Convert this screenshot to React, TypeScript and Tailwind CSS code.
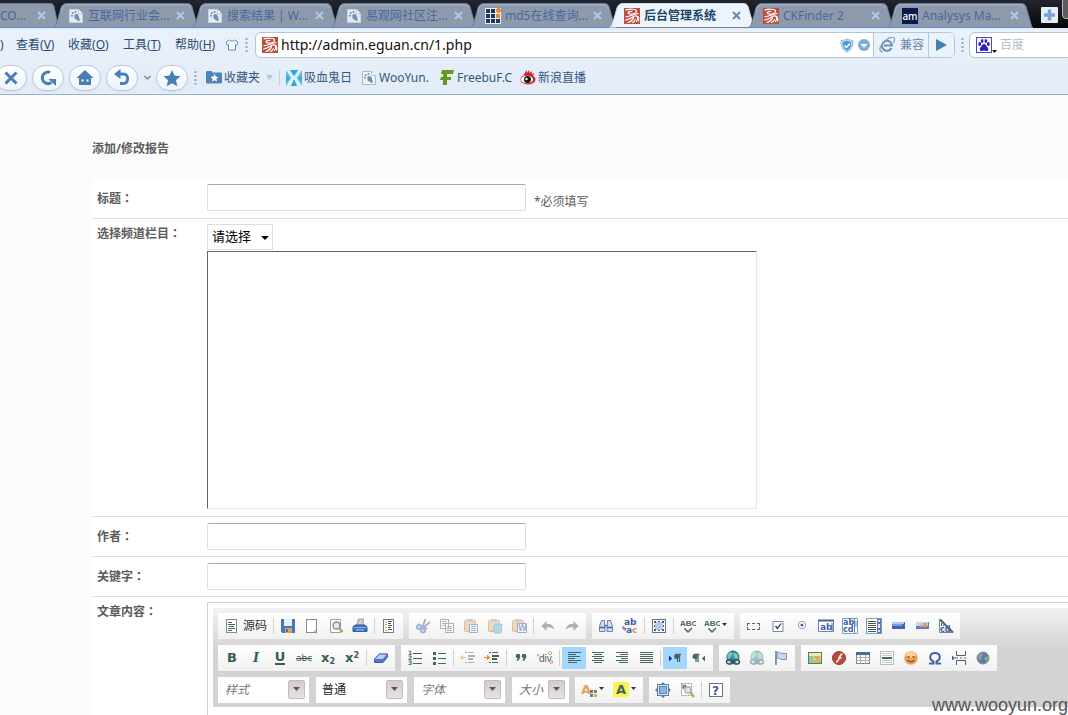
import React from "react";

type Kids = { children?: React.ReactNode };

const G = "#466663";
const B = "#435fa6";

function Ico({ children, crisp, dim }: Kids & { crisp?: boolean; dim?: boolean }) {
  return (
    <svg
      width="16"
      height="16"
      viewBox="0 0 16 16"
      fill="none"
      aria-hidden="true"
      className={dim ? "shrink-0 opacity-45" : "shrink-0"}
      shapeRendering={crisp ? "crispEdges" : undefined}
    >
      {children}
    </svg>
  );
}

/* ---------- site icons ---------- */

const PageFav = ({ faded }: { faded?: boolean }) => (
  <Ico>
    <path d="M1.500 1.500h9l4 4v9h-13z" fill={faded ? "#e3ebf2" : "#f1f5f9"} stroke={faded ? "#c6d4e1" : "#a9bac9"} />
    <path d="M10.500 1.500v4h4" fill="#fff" stroke="#b6c6d4" />
    <g fill={faded ? "#6d90b2" : "#6f8ea8"}>
      <circle cx="7.500" cy="4" r="1" />
      <circle cx="4.800" cy="5" r="1" />
      <circle cx="4" cy="7.800" r="1" />
      <path d="M6.500 6.500l3-.5 1.500 2.500v3l-2 .8-2.500-2z" />
      <path d="M9.500 10h2v3h-1.500z" />
    </g>
  </Ico>
);

const EguanFav = () => (
  <Ico>
    <rect width="16" height="16" fill="#bd4f40" />
    <g stroke="#fff" strokeWidth="1.200" strokeLinecap="round">
      <path d="M2 1.800c3-.8 10-1 10.500 1S9 6.800 6 6 3.500 3.200 8 3.500" />
      <path d="M2 8.800C6 8.500 9 6.500 14 5.500M1.500 12C6 11.500 8 8.500 11 8s3.500 2.500 1.500 5.500M4 14.500C8 13 9 11.500 9.500 9.500M8.500 14.500c1.500-.5 2.500-1.500 2.800-3M14.500 13c.3-1.500.3-3-.5-4.500" />
    </g>
  </Ico>
);

const Md5Fav = () => (
  <Ico crisp>
    <rect width="16" height="16" fill="#e9edf4" />
    <path d="M1 1h4v4H1zM6 1h4v4H6zM1 6h4v4H1zM6 6h4v4H6zM1 11h4v4H1zM6 11h4v4H6zM11 11h4v4h-4z" fill="#1e3763" />
    <path d="M11 6h4v4h-4z" fill="#ea8a2e" />
    <path d="M12 0h3v1h1v3h-1v1h-3V4h-1V1h1z" fill="#f3892c" />
  </Ico>
);

const AmFav = () => (
  <span className="flex h-4 w-4 shrink-0 items-center justify-center bg-[#0a1a4d] text-[10px] leading-none font-medium text-white">
    am
  </span>
);

const Close = ({ light }: { light?: boolean }) => (
  <svg width="9" height="9" viewBox="0 0 9 9" aria-hidden="true">
    <path d="M1 1l7 7M8 1L1 8" stroke={light ? "#a9cdee" : "#5d8cb8"} strokeWidth="2" />
  </svg>
);

/* ---------- tab strip ---------- */

type Tab = { text: string; icon: React.ReactNode; active?: boolean };

const tabs: Tab[] = [
  { text: "互联网行业会...", icon: <PageFav faded /> },
  { text: "搜索结果 | W...", icon: <PageFav faded /> },
  { text: "易观网社区注...", icon: <PageFav faded /> },
  { text: "md5在线查询...", icon: <Md5Fav /> },
  { text: "后台管理系统", icon: <EguanFav />, active: true },
  { text: "CKFinder 2", icon: <EguanFav /> },
  { text: "Analysys Ma...", icon: <AmFav /> },
];

function TabShape({ active, tail }: { active?: boolean; tail?: boolean }) {
  return (
    <svg className="pointer-events-none absolute inset-y-0 -left-1" width={tail ? 63 : 146} height="25" aria-hidden="true">
      <path
        d={
          tail
            ? "M0 .5H54c3 0 3 1 4 3l4.500 21H0"
            : "M.5 24.500C3 23 3 22 4 19l4-14c1-3 3-4.500 6-4.500H134c3 0 4 1 5 3l6 21"
        }
        fill={active ? "#edf4fc" : "#8f99ac"}
        stroke={active ? "#c6dcf3" : "#5f7fa8"}
      />
      {!active && !tail && <path d="M8 9c1-5 2-7 6-7h119c3 0 3 1 4 3" fill="none" stroke="#a9b4c5" />}
      {!active && <path d={tail ? "M0 24.500h63" : "M1 24.500h145"} stroke="#5f93cc" />}
    </svg>
  );
}

function TabStrip() {
  return (
    <div className="flex h-7 items-end overflow-hidden bg-linear-to-b from-[#22262c] to-[#08090b] text-xs">
      <div className="relative flex h-[25px] w-[57px] shrink-0 items-center">
        <TabShape tail />
        <span className="relative w-[37px] text-[#47688f]">CO...</span>
        <button type="button" aria-label="关闭" className="relative"><Close light /></button>
      </div>
      {tabs.map((t) => (
        <div key={t.text} className="relative flex h-[25px] w-[139px] shrink-0 items-center pl-[11px]">
          <TabShape active={t.active} />
          <a
            href="#tab"
            className={
              t.active
                ? "relative flex w-[108px] items-center gap-1 font-bold whitespace-nowrap text-[#1b4468]"
                : "relative flex w-[108px] items-center gap-1 whitespace-nowrap text-[#466a98]"
            }
          >
            {t.icon}
            {t.text}
          </a>
          <button type="button" aria-label="关闭" className="relative"><Close light={!t.active} /></button>
        </div>
      ))}
      <button type="button" aria-label="新标签" className="mb-[5px] ml-[11px] shrink-0">
        <svg width="17" height="16" viewBox="0 0 17 16" aria-hidden="true">
          <rect width="17" height="16" rx="1" fill="#e3eefa" />
          <path d="M8.500 2.500v11M3 8h11" stroke="#7ba3cb" strokeWidth="3.500" />
        </svg>
      </button>
      <span className="mb-[9px] ml-1 h-5 w-4 shrink-0 rounded-bl-sm border border-[#b9b9b9] bg-[#5c5c5c]" />
    </div>
  );
}

/* ---------- address row ---------- */

const Dots = () => (
  <svg width="3" height="14" viewBox="0 0 3 14" className="shrink-0" aria-hidden="true">
    <path d="M.5 0h2v2h-2zM.5 4h2v2h-2zM.5 8h2v2h-2zM.5 12h2v2h-2z" fill="#93a8bf" />
  </svg>
);

const Menu = ({ name, k, w }: { name: string; k: string; w: string }) => (
  <button type="button" className={w + " shrink-0 text-left whitespace-nowrap"}>
    {name}(<span className="underline">{k}</span>)
  </button>
);

function AddressRow() {
  return (
    <div className="flex h-8 shrink-0 items-center text-xs text-[#2b4a73]">
      <span className="w-4 shrink-0">)</span>
      <Menu name="查看" k="V" w="w-[52px]" />
      <Menu name="收藏" k="O" w="w-[55px]" />
      <Menu name="工具" k="T" w="w-[52px]" />
      <Menu name="帮助" k="H" w="w-[50px]" />
      <button type="button" aria-label="皮肤" className="shrink-0">
        <svg width="14" height="12" viewBox="0 0 14 12" aria-hidden="true">
          <path d="M4.500 1L1 3l1 3 1.500-.5V11h7V5.500L12 6l1-3-3.500-2c-1 1.500-4 1.500-5 0z" fill="#f6faff" stroke="#5b8dbb" />
        </svg>
      </button>
      <span className="ml-[6px] flex w-[10px]"><Dots /></span>
      <div className="flex h-[26px] min-w-0 flex-1 items-stretch overflow-hidden rounded-md border border-[#b3c6da] bg-white">
        <div className="flex min-w-0 flex-1 items-center gap-[3px] pl-[6px]">
          <EguanFav />
          <input
            aria-label="地址"
            defaultValue="http://admin.eguan.cn/1.php"
            className="min-w-0 flex-1 text-sm text-[#111] outline-none"
          />
        </div>
        <div className="flex items-center gap-1 pr-[3px]">
          <svg width="14" height="15" viewBox="0 0 14 15" aria-hidden="true">
            <path d="M7 .8c2 1.400 4 1.700 6 1.700 0 6-1.500 9.500-6 11.700C2.500 12 1 8.500 1 2.500c2 0 4-.3 6-1.700z" fill="#cfe8f8" stroke="#8bb9dd" />
            <path d="M7 2.500c1.500 1 3 1.300 4.500 1.300 0 4.700-1.200 7.200-4.500 9-3.300-1.800-4.500-4.300-4.500-9 1.500 0 3-.3 4.500-1.300z" fill="#4a9bd4" />
            <path d="M4.500 7.500l2 2 3.500-4" stroke="#fff" strokeWidth="1.500" fill="none" />
          </svg>
          <svg width="12" height="12" viewBox="0 0 12 12" aria-hidden="true">
            <circle cx="6" cy="6" r="6" fill="#7eabd9" />
            <path d="M2.500 5h7L6 9z" fill="#fff" />
          </svg>
        </div>
        <button type="button" className="flex w-[55px] items-center gap-1 border-l border-[#b3c6da] bg-[#eaf2fb] pl-[5px] text-[#6b87a3]">
          <svg width="17" height="16" viewBox="0 0 17 16" fill="none" aria-hidden="true">
            <path d="M12.500 11A5 5 0 1 1 13 8.500H5" stroke="#6892bb" strokeWidth="2" />
            <path d="M3.500 15C-2 14.500 2 6 8.500 2S17 1 14.500 6" stroke="#7ea3c8" strokeWidth="1.300" />
          </svg>
          兼容
        </button>
        <button type="button" aria-label="转到" className="flex w-[26px] items-center justify-center border-l border-[#b3c6da] bg-[#eaf2fb]">
          <svg width="11" height="12" viewBox="0 0 11 12" aria-hidden="true"><path d="M0 0l11 6-11 6z" fill="#4580b5" /></svg>
        </button>
      </div>
      <span className="flex w-[14px] justify-center"><Dots /></span>
      <div className="-mr-2 flex h-[26px] w-[107px] shrink-0 items-center rounded-md border border-[#b3c6da] bg-white pl-[6px]">
        <svg width="21" height="17" viewBox="0 0 21 17" className="shrink-0" aria-hidden="true">
          <rect x=".5" y=".5" width="15" height="15" fill="#fff" stroke="#4a44b4" />
          <g fill="#2b22c4">
            <ellipse cx="3.700" cy="7" rx="1.500" ry="1.900" />
            <ellipse cx="6.200" cy="4" rx="1.300" ry="1.900" />
            <ellipse cx="9.800" cy="4" rx="1.300" ry="1.900" />
            <ellipse cx="12.400" cy="7" rx="1.500" ry="1.900" />
            <path d="M8 7c2 0 2 2 3.500 3.500S12.500 14 10.500 14 9 13.500 8 13.500 7 14 5.500 14s-2.500-2-1-3.500S6 7 8 7z" />
          </g>
          <path d="M16 13h5l-2.500 3z" fill="#111" />
        </svg>
        <input aria-label="搜索" placeholder="百度" className="ml-[3px] w-16 min-w-0 text-xs outline-none placeholder:text-[#b9bdc2]" />
      </div>
    </div>
  );
}

/* ---------- bookmarks row ---------- */

const Round = ({ label, children }: Kids & { label: string }) => (
  <button
    type="button"
    aria-label={label}
    className="flex h-[26px] w-8 shrink-0 items-center justify-center rounded-full border border-[#b7c8de] bg-linear-to-b from-white to-[#edf4fc] shadow-xs"
  >
    <svg width="18" height="18" viewBox="0 0 18 18" fill="none" stroke="#477fb3" strokeWidth="3" aria-hidden="true">
      {children}
    </svg>
  </button>
);

const Mark = ({ icon, text, w }: { icon: React.ReactNode; text: string; w: string }) => (
  <a href="#mark" className={w + " flex shrink-0 items-center gap-[2px] whitespace-nowrap"}>
    {icon}
    {text}
  </a>
);

function BookmarkRow() {
  return (
    <div className="flex h-[34px] shrink-0 items-center border-b border-[#96b2d2] text-xs text-[#34577f]">
      <div className="-ml-[5px] flex items-center gap-[5px]">
        <Round label="停止"><path d="M3.500 3.500l11 11M14.500 3.500l-11 11" /></Round>
        <Round label="刷新">
          <path d="M11 3.300A5.800 5.800 0 1 0 12.500 13.500" />
          <path d="M9.500 10h7.500v7z" fill="#477fb3" stroke="none" />
        </Round>
        <Round label="主页">
          <path d="M9 1l8.500 8H15v7H3V9H.5z" fill="#477fb3" stroke="none" />
          <path d="M5.500 10.500h2v2h-2zM10.500 10.500h2v2h-2z" fill="#fff" stroke="none" />
        </Round>
        <Round label="后退">
          <path d="M6 5h4.500c5.500 0 5.500 9.500 0 9.500H7" />
          <path d="M7.500 0v10L1 5z" fill="#477fb3" stroke="none" />
        </Round>
      </div>
      <button type="button" aria-label="历史" className="mx-[5px] flex w-[8px] justify-center">
        <svg width="7" height="5" viewBox="0 0 7 5" fill="none" aria-hidden="true"><path d="M.5 1l3 3 3-3" stroke="#5d88b3" strokeWidth="1.300" /></svg>
      </button>
      <Round label="收藏">
        <path d="M9 1l2.500 5.500 6 .7-4.500 4 1.300 6L9 14.300 3.700 17.200 5 11.200.5 7.200l6-.7z" fill="#477fb3" stroke="none" />
      </Round>
      <span className="ml-[6px] flex w-3"><Dots /></span>
      <Mark
        w="w-[60px]"
        text="收藏夹"
        icon={
          <Ico>
            <path d="M0 2.500C0 1.500.5 1 1.500 1h4l1 1.500h8c1 0 1.500.5 1.500 1.500v8.500c0 .5-.5 1-1.500 1h-13c-1 0-1.500-.5-1.500-1z" fill="#5084b8" />
            <path d="M8.500 4l1.200 2.500 2.800.4-2 1.900.5 2.800-2.500-1.300L6 11.600l.5-2.800-2-1.900 2.800-.4z" fill="#fff" />
          </Ico>
        }
      />
      <svg width="7" height="5" viewBox="0 0 7 5" className="shrink-0" aria-hidden="true"><path d="M0 0h7L3.500 5z" fill="#b5c4d6" /></svg>
      <span className="mr-[6px] ml-[6px] h-4 w-px bg-[#c2d2e5]" />
      <Mark
        w="w-[75px]"
        text="吸血鬼日"
        icon={
          <Ico>
            <rect width="16" height="16" fill="#5cbbe6" />
            <path d="M0 0h4l4 6 4-6h4l-5 8 5 8h-5L8 9.500 5 16H0l5-8z" fill="#d9f2fb" />
            <path d="M4 0h8L8 6zM5 16l3-6.500L11 16z" fill="#2fa4da" />
            <path d="M0 12l5-4-5-3zM16 12l-5-4 5-3z" fill="#3fabdc" />
          </Ico>
        }
      />
      <Mark w="w-[78px]" text="WooYun." icon={<PageFav />} />
      <Mark
        w="w-[81px]"
        text="FreebuF.C"
        icon={<Ico><path d="M3 0h12l-1 4H8v3h4v3H8v5H4v-5H1l1-3h2V4H2z" fill="#64981f" /></Ico>}
      />
      <Mark
        w="w-[80px]"
        text="新浪直播"
        icon={
          <Ico>
            <path d="M4 5C5 2 6 2 6 0c1 1 1 2 1 3 1-1 1.500-2 1.500-3 1 1 1 2 1 3 1-.5 2-1 2-2 1 1 .5 2 0 3 1 0 2-.5 2.500-1 0 1-.5 2-1 3z" fill="#d2232a" />
            <ellipse cx="8" cy="9.500" rx="7.500" ry="5" fill="#cf1f2a" />
            <ellipse cx="7" cy="9.500" rx="6" ry="3.800" fill="#fff" />
            <circle cx="7.500" cy="9.500" r="3.500" fill="#1b1510" />
            <circle cx="6.500" cy="9" r="1.200" fill="#fff" />
          </Ico>
        }
      />
    </div>
  );
}

/* ---------- editor toolbar ---------- */

const Btn = ({ label, on, menu, children }: Kids & { label: string; on?: boolean; menu?: boolean }) => (
  <button
    type="button"
    aria-label={label}
    className={
      on
        ? "flex h-[22px] w-6 shrink-0 items-center justify-center bg-[#a3d7ff]"
        : menu
          ? "flex h-[22px] w-8 shrink-0 items-center gap-[2px] pl-1"
          : "flex h-[22px] w-6 shrink-0 items-center justify-center"
    }
  >
    {children}
    {menu && (
      <svg width="5" height="3" viewBox="0 0 5 3" className="mb-1 shrink-0" aria-hidden="true"><path d="M0 0h5L2.500 3z" fill="#333" /></svg>
    )}
  </button>
);

const Group = ({ children }: Kids) => (
  <div className="flex h-[26px] shrink-0 items-center bg-linear-to-b from-white to-[#f1f1f1] px-[2px]">{children}</div>
);

const Sep = () => <span className="mx-[2px] h-4 w-px shrink-0 bg-[#cfcfcf]" />;

const T = ({ x, y, s, c, children, i }: Kids & { x: number; y: number; s: number; c: string; i?: boolean }) => (
  <text x={x} y={y} fontSize={s} fill={c} fontWeight="bold" fontStyle={i ? "italic" : undefined} fontFamily="DejaVu Sans, sans-serif">
    {children}
  </text>
);

const Paste = ({ children }: Kids) => (
  <Ico dim>
    <rect x="1.500" y="2.500" width="11" height="11" rx="1" fill="#e8b27a" stroke="#b5773a" />
    <rect x="4" y="1" width="6" height="3" fill="#999" />
    {children}
  </Ico>
);

const Spell = () => (
  <Ico>
    <text x="0" y="8" fontSize="8" fontWeight="bold" fontFamily="Liberation Sans, sans-serif" fill={G}>ABC</text>
    <path d="M4.500 10.500l3.500 3.500 4-4" stroke={G} strokeWidth="1.500" />
  </Ico>
);

const Lines = ({ rows }: { rows: [number, number][] }) => (
  <Ico crisp>
    {rows.map(([x, w], n) => (
      <rect key={n} x={x} y={2 + n * 2} width={w} height="1" fill={G} />
    ))}
  </Ico>
);

const Indent = ({ back }: { back?: boolean }) => (
  <Ico crisp dim={back}>
    <path d="M5 2h2v1H5zM8 2h6v1H8zM8 5h7v2H8zM8 8h5v2H8zM5 12h2v1H5zM8 12h6v1H8z" fill={G} />
    <path d={back ? "M0 7h6v1H0zM1 6h2v3H1zM2 5h1v5H2z" : "M0 7h6v1H0zM3 6h2v3H3zM3 5h1v5H3z"} fill="#e88a1c" />
  </Ico>
);

const Globe = ({ dim }: { dim?: boolean }) => (
  <Ico dim={dim}>
    <circle cx="8" cy="7" r="6" fill="#3b87b8" stroke="#2d5f70" />
    <path d="M3.500 3.500c3-2.500 4.500-.5 3.500 1.500s-2.500 3-3.500 4.500C2 7.500 2 5 3.500 3.500zM8.500 2.500l4 1.500 1 4-3 1-2-3.500z" fill="#6fd0a0" />
    <rect x="1.500" y="10" width="6" height="4" rx="2" fill="#c6dce0" stroke="#2b4f58" strokeWidth="1.300" />
    <rect x="8.500" y="10" width="6" height="4" rx="2" fill="#c6dce0" stroke="#2b4f58" strokeWidth="1.300" />
    <path d="M5 12h6" stroke="#2b4f58" strokeWidth="1.300" />
  </Ico>
);

function RowOne() {
  return (
    <div className="flex gap-[6px]">
      <Group>
        <button type="button" className="flex h-[22px] w-[51px] shrink-0 items-center gap-[3px] pl-1 text-xs text-[#333]">
          <Ico crisp>
            <path d="M2.500 1.500h10v13h-10z" fill="#fff" stroke="#7f8f8f" />
            <path d="M4 4h4v1H4zM4 6h7v1H4zM5 8h5v1H5zM4 10h7v1H4zM4 12h4v1H4z" fill={G} />
          </Ico>
          <span className="whitespace-nowrap">源码</span>
        </button>
        <Sep />
        <Btn label="保存">
          <Ico crisp>
            <path d="M1 1h14v14H2l-1-1z" fill="#4677bd" />
            <path d="M4 1h8v7H4z" fill="#e9eff8" />
            <path d="M5 10h7v5H5z" fill="#dba263" />
            <path d="M6 11h2v3H6z" fill="#5a6a8a" />
          </Ico>
        </Btn>
        <Btn label="新建"><Ico crisp><path d="M2.500 1.500h10v13h-10z" fill="#fff" stroke="#7f8f8f" /><path d="M11 12h1v1h-1v1h-1v-1h1z" fill="#6d7f7f" /></Ico></Btn>
        <Btn label="预览">
          <Ico>
            <path d="M2.500 1.500h10v13h-10z" fill="#fff" stroke="#95a3a3" />
            <circle cx="8.500" cy="7.500" r="3.500" fill="#e2eaee" stroke="#7b8b90" strokeWidth="1.300" />
            <path d="M11 10l3.500 4" stroke="#c39d5e" strokeWidth="2.500" />
          </Ico>
        </Btn>
        <Btn label="打印">
          <Ico>
            <path d="M5 7l1.500-6h5L11 7z" fill="#d5d0d0" stroke="#9a9a9a" />
            <path d="M3 7h10l2 2v4.500H1V9z" fill="#4474be" stroke="#345fa5" />
            <path d="M2 9.500h12" stroke="#8fb0e6" /><path d="M4 12h8" stroke="#a9c3ee" />
          </Ico>
        </Btn>
        <Sep />
        <Btn label="模板">
          <Ico crisp>
            <path d="M2.500 1.500h10v13h-10z" fill="#fff" stroke="#6f8080" />
            <path d="M4 4h2v1H4zM4 6h2v1H4zM4 9h2v1H4zM4 12h2v1H4z" fill="#e0a850" />
            <path d="M7 3h4v1H7zM7 5h3v1H7zM7 7h4v1H7zM7 9h3v1H7zM7 11h4v1H7z" fill="#555" />
          </Ico>
        </Btn>
      </Group>
      <Group>
        <Btn label="剪切">
          <Ico dim>
            <path d="M10.500 1L7 10M3 6l9 5" stroke="#4a6470" strokeWidth="2" />
            <path d="M15 4l-6 5" stroke="#4a6470" strokeWidth="2" />
            <circle cx="4" cy="9" r="2" stroke="#2f62c0" strokeWidth="2" />
            <circle cx="8" cy="12.500" r="2" stroke="#2f62c0" strokeWidth="2" />
          </Ico>
        </Btn>
        <Btn label="复制">
          <Ico dim crisp>
            <path d="M1.500 1.500h8v9h-8zM6.500 5.500h8v9h-8z" fill="#fff" stroke={G} />
            <path d="M3 3h5v1H3zM3 5h3v1H3zM3 7h3v1H3zM8 8h5v1H8zM8 10h5v1H8zM8 12h5v1H8z" fill={G} />
          </Ico>
        </Btn>
        <Btn label="粘贴"><Paste><path d="M6.500 6.500h8v8h-8z" fill="#fff" stroke="#3b57a0" /><path d="M8 8.500h5M8 10.500h5M8 12.500h5" stroke="#3b57a0" /></Paste></Btn>
        <Btn label="粘贴为文本"><Paste><path d="M8 6l7 .5-1 8.500H8l-2-3z" fill="#59b3d8" stroke="#3b8fb8" /></Paste></Btn>
        <Btn label="从 Word 粘贴"><Paste><path d="M6.500 5.500h9v9h-9z" fill="#fff" stroke="#3b57a0" /><T x={7} y={13} s={8} c="#3b57a0">W</T></Paste></Btn>
        <Sep />
        <Btn label="撤消"><Ico dim><path d="M6.500 3v3c5-.5 7.500 2 7.500 6-1.500-2-3.500-3-7.500-2.500V13L1.500 8z" fill="#486062" /></Ico></Btn>
        <Btn label="重做"><Ico dim><path d="M9.500 3v3C4.500 5.500 2 8 2 12c1.500-2 3.500-3 7.500-2.500V13l5-5z" fill="#486062" /></Ico></Btn>
      </Group>
      <Group>
        <Btn label="查找">
          <Ico>
            <path d="M3.500 2.500h3v4l.5 2v5H1.500v-5zM9.500 2.500h3l2 6v5H9v-5l.5-2z" fill="#d3deef" stroke="#6a84b4" />
            <path d="M6.500 7.500h3M1.500 9.500H7M9 9.500h5.500" stroke={B} strokeWidth="1.500" />
          </Ico>
        </Btn>
        <Btn label="替换">
          <Ico>
            <T x={2} y={7} s={9} c={B}>ab</T>
            <T x={4} y={15} s={9} c={B}>a</T>
            <T x={10} y={15} s={9} c="#e58f66">c</T>
            <path d="M1 8v3h3M2.500 9.500L4 11l-1.500 1.500" stroke="#5a4f9c" />
          </Ico>
        </Btn>
        <Sep />
        <Btn label="全选">
          <Ico crisp>
            <path d="M1.500 1.500h13v13h-13z" fill="#fff" stroke="#637575" />
            <path d="M4 4h8v8H4z" fill="#b4cbeb" />
            <path d="M3 3h2v2H3zM7 3h2v1H7zM11 3h2v2h-2zM3 7h1v2H3zM12 7h1v2h-1zM3 11h2v2H3zM7 12h2v1H7zM11 11h2v2h-2z" fill="#3f5e80" />
          </Ico>
        </Btn>
        <Sep />
        <Btn label="拼写检查"><Spell /></Btn>
        <Btn label="即时拼写检查" menu><Spell /></Btn>
      </Group>
      <Group>
        <Btn label="表单"><Ico crisp><path d="M1 5h3v1H2v2H1zM6 5h3v1H6zM11 5h3v3h-1V6h-2zM1 9h1v2h2v1H1zM6 11h3v1H6zM13 9h1v3h-3v-1h2z" fill="#556a80" /></Ico></Btn>
        <Btn label="复选框"><Ico><path d="M3 3.500h10v10H3z" fill="#fff" stroke="#7088b8" /><path d="M5.500 8l2 2.500L11 5.500" stroke="#333" strokeWidth="1.300" /></Ico></Btn>
        <Btn label="单选按钮"><Ico><circle cx="8" cy="7" r="3.700" fill="#fff" stroke="#8b9fc6" /><circle cx="8" cy="7" r="1.500" fill={B} /></Ico></Btn>
        <Btn label="单行文本"><Ico><path d="M.5 2.500h15v11H.5z" fill="#fff" stroke="#6b82b8" /><path d="M0 2.500h16" stroke={B} strokeWidth="2" /><T x={2} y={12} s={9} c={B}>ab</T><path d="M14 5v8" stroke={B} /></Ico></Btn>
        <Btn label="多行文本"><Ico><path d="M.5.500h15v15H.5z" fill="#fff" stroke="#6fa3b8" /><path d="M12.500 1v14M14 3v6" stroke="#6b82b8" /><T x={1} y={7} s={8} c={B}>ab</T><T x={1} y={14} s={8} c={B}>cd</T></Ico></Btn>
        <Btn label="列表/菜单"><Ico crisp><path d="M.5.500h15v15H.5z" fill="#fff" stroke="#6fa3b8" /><path d="M2 3h8v1H2zM2 5h8v1H2zM2 7h8v1H2zM2 9h8v1H2zM2 11h8v1H2zM2 13h8v1H2z" fill="#555" /><path d="M11 1h4v14h-4z" fill="#6272b4" /><path d="M12 2h2v2h-2zM12 6h2v4h-2zM12 12h2v2h-2z" fill="#dde6ff" /></Ico></Btn>
        <Btn label="按钮"><Ico crisp><path d="M2 4h13v7H2z" fill="#4163b8" /><path d="M2 4h12v2H2z" fill="#b4c8f0" /><path d="M2 6h10v2H2z" fill="#7e9ce0" /></Ico></Btn>
        <Btn label="图像按钮"><Ico crisp><path d="M2 4h13v7H2z" fill="#5f7cc0" /><path d="M2 4h12v4H2z" fill="#bfd6ee" /><path d="M6 7h3V5h4v4H6z" fill="#dd9c65" /></Ico></Btn>
        <Btn label="隐藏域"><Ico><path d="M1.500 1.500v13H15z" fill="#eef2f7" stroke="#6f8a94" /><path d="M2 1.500L15 14.500" stroke={G} strokeWidth="2" /><T x={2} y={14} s={8} c={B}>cd</T><path d="M3.500 5v3M5.500 7v1" stroke={B} /></Ico></Btn>
      </Group>
    </div>
  );
}

function RowTwo() {
  return (
    <div className="flex gap-[6px] font-['DejaVu_Sans',sans-serif] text-[#3b5b57]">
      <Group>
        <Btn label="加粗"><span className="text-[13px] font-bold">B</span></Btn>
        <Btn label="倾斜"><span className="font-['DejaVu_Serif',serif] text-[13px] font-bold italic">I</span></Btn>
        <Btn label="下划线"><span className="border-b-2 border-[#3b5b57] text-[13px] leading-3 font-bold">U</span></Btn>
        <Btn label="删除线"><span className="text-[9px] line-through">abc</span></Btn>
        <Btn label="下标"><span className="text-[13px] font-bold">x<sub className="text-[8px]">2</sub></span></Btn>
        <Btn label="上标"><span className="text-[13px] font-bold">x<sup className="text-[8px]">2</sup></span></Btn>
        <Sep />
        <Btn label="清除格式"><Ico><path d="M6 4h8.500v3L10 12.500H1.500V9.500z" fill="#5578c8" stroke="#3f5da5" /><path d="M6 4h8.500L10 9.500H1.500z" fill="#b4caf4" stroke="#5475bb" /></Ico></Btn>
      </Group>
      <Group>
        <Btn label="编号列表">
          <Ico>
            <path d="M6 3.500h9M6 8.500h9M6 13.500h9" stroke={G} />
            <T x={1} y={5} s={6} c={G}>1</T><T x={1} y={10} s={6} c={G}>2</T><T x={1} y={15} s={6} c={G}>3</T>
          </Ico>
        </Btn>
        <Btn label="项目列表"><Ico crisp><path d="M2 2h3v3H2zM2 7h3v3H2zM2 12h3v3H2zM7 3h8v1H7zM7 8h8v1H7zM7 13h8v1H7z" fill={G} /></Ico></Btn>
        <Sep />
        <Btn label="减少缩进"><Indent back /></Btn>
        <Btn label="增加缩进"><Indent /></Btn>
        <Sep />
        <Btn label="引用"><Ico><circle cx="5" cy="6" r="2.300" fill={G} /><circle cx="11" cy="6" r="2.300" fill={G} /><path d="M6.500 6c0 2-.5 3-2.500 4.500M12.500 6c0 2-.5 3-2.500 4.500" stroke={G} strokeWidth="1.600" /></Ico></Btn>
        <Btn label="DIV"><Ico><text x="0" y="12" fontSize="10" fontFamily="Liberation Sans, sans-serif" fill={G}>'div,</text><path d="M13 1l2 2-2 2-2-2zM14 10l1.500 2-1.500 2-2-2z" stroke="#e0a468" /></Ico></Btn>
        <Sep />
        <Btn label="左对齐" on><Lines rows={[[2, 13], [2, 8], [2, 12], [2, 7], [2, 13], [2, 9]]} /></Btn>
        <Btn label="居中"><Lines rows={[[2, 12], [4, 8], [2, 12], [4, 8], [2, 12], [4, 8]]} /></Btn>
        <Btn label="右对齐"><Lines rows={[[2, 12], [6, 8], [2, 12], [7, 7], [2, 12], [5, 9]]} /></Btn>
        <Btn label="两端对齐"><Lines rows={[[2, 13], [2, 13], [2, 13], [2, 13], [2, 13], [2, 13]]} /></Btn>
        <Sep />
        <Btn label="文字方向从左到右" on><Ico><path d="M2 5.500l3 3-3 3z" fill="#1f2390" /><path d="M8.500 4.500H14M10.500 4v8M12.500 4v8" stroke={G} strokeWidth="1.300" /><circle cx="9.500" cy="6.500" r="2.500" fill={G} /></Ico></Btn>
        <Btn label="文字方向从右到左"><Ico><path d="M14 5.500l-3 3 3 3z" fill="#5a4f9c" /><path d="M3 4.500h5.500M5 4v8M7 4v8" stroke={G} strokeWidth="1.300" /><circle cx="4" cy="6.500" r="2.500" fill={G} /></Ico></Btn>
      </Group>
      <Group>
        <Btn label="超链接"><Globe /></Btn>
        <Btn label="取消超链接"><Globe dim /></Btn>
        <Btn label="锚点"><Ico><path d="M3 1v14" stroke="#5f70a4" strokeWidth="1.500" /><path d="M4 2.500c3-1 3 1 5 1h4.500v6H9c-2 0-3-2-5-1z" fill="#c6d7f0" stroke="#7c92be" /></Ico></Btn>
      </Group>
      <Group>
        <Btn label="图像"><Ico crisp><path d="M1.500 2.500h13v11h-13z" fill="#b7dcae" stroke="#587a72" /><path d="M2 10h12v3H2z" fill="#b9c468" /><path d="M2 3h12v3H2z" fill="#e6eeb0" /><path d="M7 6h6v4H9V8H7z" fill="#eba656" /><path d="M2 6h4v4H2z" fill="#8fc8a0" /></Ico></Btn>
        <Btn label="Flash"><Ico><circle cx="8" cy="8" r="6.500" fill="#c0453b" stroke="#9b3a33" /><path d="M11.500 4C8 4 8.500 12 5 12M7 8h3.500" stroke="#fff" strokeWidth="1.500" /></Ico></Btn>
        <Btn label="表格"><Ico crisp><path d="M1.500 2.500h13v11h-13z" fill="#fff" stroke="#6d8282" /><path d="M1 2h14v3H1z" fill="#4f6a8f" /><path d="M1 7h14v1H1zM1 10h14v1H1zM5 5h1v9H5zM10 5h1v9h-1z" fill="#a3b0b0" /></Ico></Btn>
        <Btn label="水平线"><Ico crisp><path d="M1.500 1.500h13v13h-13z" fill="#fff" stroke="#b8c0c0" /><path d="M3 3h10v1H3zM3 5h10v1H3zM3 10h10v1H3zM3 12h10v1H3z" fill="#c3c9c9" /><path d="M3 7h10v2H3z" fill={G} /></Ico></Btn>
        <Btn label="表情"><Ico><circle cx="8" cy="8" r="6.800" fill="#eda25a" /><ellipse cx="8" cy="5" rx="5" ry="3" fill="#fbd29a" /><path d="M4.500 7h2M9.500 7h2" stroke="#7b3c18" strokeWidth="1.500" /><path d="M4.500 10c2 2.500 5 2.500 7 0" stroke="#a1461c" strokeWidth="1.300" /></Ico></Btn>
        <Btn label="特殊符号"><Ico><path d="M2 13.500h4.500v-2C1.500 9 2.500 3 8 3s6.500 6 1.500 8.500v2H14" stroke={B} strokeWidth="2" /></Ico></Btn>
        <Btn label="分页符"><Ico><path d="M5.500 1v4.500h9V1M5.500 15v-4.500h9V15M4 8h3M9 8h2M13 8h2" stroke={G} /><path d="M1 5.500L4 8l-3 2.500z" fill={B} /></Ico></Btn>
        <Btn label="iFrame"><Ico><circle cx="8" cy="8" r="6" fill="#5f7ba6" stroke="#7c8ba2" /><path d="M4 4c3-2 5 0 3 2s0 3-2 4C3 9 3 6 4 4zM9 8l4-2 1 2-3 4z" fill="#95a582" /></Ico></Btn>
      </Group>
    </div>
  );
}

const Combo = ({ text, value, small }: { text: string; value?: string; small?: boolean }) => (
  <div className={small ? "relative h-[26px] w-[57px] shrink-0 bg-white" : "relative h-[26px] w-[91px] shrink-0 bg-white"}>
    <select
      aria-label={text}
      className={
        value
          ? "h-full w-full appearance-none pl-[6px] text-xs text-[#222]"
          : "h-full w-full appearance-none pl-[7px] text-xs text-[#777] italic"
      }
    >
      <option>{value ?? text}</option>
    </select>
    <span className="pointer-events-none absolute top-[3px] right-1 flex h-[19px] w-[17px] items-center justify-center rounded-xs border border-[#c2bcbc] bg-linear-to-b from-[#d3cbcb] to-[#e8e3e3] pb-px">
      <svg width="7" height="4" viewBox="0 0 7 4" aria-hidden="true"><path d="M0 0h7L3.500 4z" fill="#5c5656" /></svg>
    </span>
  </div>
);

function RowThree() {
  return (
    <div className="flex gap-[6px]">
      <div className="flex gap-[7px]">
        <Combo text="样式" />
        <Combo text="格式" value="普通" />
        <Combo text="字体" />
        <Combo text="大小" small />
      </div>
      <Group>
        <Btn label="文本颜色" menu>
          <Ico><T x={0} y={12} s={13} c="#dfa860">A</T><path d="M9 8h3v3H9z" fill="#c8594f" /><path d="M13 8h3v3h-3z" fill="#5a9b5a" /><path d="M9 12h3v3H9z" fill="#5d7cc4" /><path d="M13 12h3v3h-3z" fill="#d9b34c" /></Ico>
        </Btn>
        <Btn label="背景颜色" menu>
          <Ico><rect width="16" height="15" fill="#f8f650" /><T x={3} y={12} s={13} c={G}>A</T></Ico>
        </Btn>
      </Group>
      <Group>
        <Btn label="全屏"><Ico><path d="M8 0l3 3H5zM8 16l3-3H5zM0 8l3-3v6zM16 8l-3-3v6z" fill="#5f8296" /><rect x="2.500" y="2.500" width="11" height="11" fill="#d3e4f7" stroke="#5d7f96" /><rect x="4.500" y="4.500" width="7" height="7" fill="#8db2e6" stroke="#5b85c6" /></Ico></Btn>
        <Btn label="显示区块"><Ico><path d="M2.500 1.500h10v12h-10z" fill="#fff" stroke="#8d9b9b" strokeDasharray="2 1" /><T x={3} y={7} s={6} c="#555">P</T><circle cx="9" cy="8" r="3.300" fill="#dde6ea" stroke="#8b979b" /><path d="M11.500 10.500L15 15" stroke="#c9a060" strokeWidth="2.300" /></Ico></Btn>
        <Sep />
        <Btn label="关于"><Ico><rect x="1.500" y="1.500" width="13" height="13" fill="#fff" stroke="#637286" /><T x={4} y={13} s={12} c="#4356a4">?</T></Ico></Btn>
      </Group>
    </div>
  );
}

/* ---------- form ---------- */

const field = "h-[27px] w-[319px] rounded-xs border border-[#dedede] border-t-[#a8a8a8] bg-white px-1 outline-none";

const Row = ({ id, label, top, children }: Kids & { id: string; label: string; top?: boolean }) => (
  <div className="flex border-b border-[#dedede] bg-white py-[5px] pl-[5px]">
    <label
      htmlFor={id}
      className={top ? "w-[110px] shrink-0 leading-[18px] font-bold" : "w-[110px] shrink-0 leading-7 font-bold"}
    >
      {label}
      <span className="font-['Noto_Sans_CJK_TC',sans-serif]">：</span>
    </label>
    <div className="min-w-0 flex-1">{children}</div>
  </div>
);

export default function App() {
  return (
    <div className="relative flex h-screen flex-col overflow-hidden bg-[#fbfbfb] font-['Noto_Sans','Noto_Sans_CJK_SC',sans-serif]">
      <header className="flex shrink-0 flex-col bg-linear-to-b from-[#edf4fc] to-[#e3ebf7]">
        <TabStrip />
        <div className="h-px bg-[#dbe9f8]" />
        <AddressRow />
        <BookmarkRow />
      </header>

      <main className="flex-1 overflow-hidden pl-[92px] text-xs text-[#5c5c5c]">
        <h1 className="pt-[45px] pb-[21px] leading-[18px] font-bold">添加/修改报告</h1>
        <form>
          <Row id="title" label="标题">
            <div className="flex h-[29px] items-start gap-2">
              <input id="title" className={field} />
              <span className="pt-[9px] leading-[18px]">*必须填写</span>
            </div>
          </Row>
          <Row id="channel" label="选择频道栏目" top>
            <div className="relative h-[27px] w-[66px]">
              <select
                id="channel"
                className="h-[26px] w-full appearance-none border border-[#dcdcdc] bg-white pl-1 text-[13px] text-black"
              >
                <option>请选择</option>
              </select>
              <svg width="8" height="4" viewBox="0 0 8 4" className="pointer-events-none absolute top-3 right-1" aria-hidden="true">
                <path d="M0 0h8L4 4z" fill="#000" />
              </svg>
            </div>
            <textarea
              aria-label="已选栏目"
              className="mb-[2px] block h-[258px] w-[550px] max-w-full resize-none border border-[#e9e9e9] border-t-[#666] border-l-[#666] bg-white outline-none"
            />
          </Row>
          <Row id="author" label="作者">
            <div className="h-[29px] pt-px"><input id="author" className={field} /></div>
          </Row>
          <Row id="keywords" label="关键字">
            <div className="h-[29px] pt-px"><input id="keywords" className={field} /></div>
          </Row>
          <Row id="content" label="文章内容" top>
            <div className="overflow-hidden border border-r-0 border-[#d0d0d0] bg-white p-[5px] pr-0">
              <div className="flex flex-col gap-[6px] bg-linear-to-b from-[#f2f2f2] via-[#d4d4d4] via-40% to-[#d2d2d2] px-[5px] pt-[5px] pb-1">
                <RowOne />
                <RowTwo />
                <RowThree />
              </div>
              <textarea id="content" className="block h-[200px] w-full resize-none outline-none" />
            </div>
          </Row>
        </form>
      </main>
      <div className="absolute right-0 bottom-0 font-['Liberation_Sans',sans-serif] text-lg leading-5 text-[#555]">www.wooyun.org</div>
    </div>
  );
}
